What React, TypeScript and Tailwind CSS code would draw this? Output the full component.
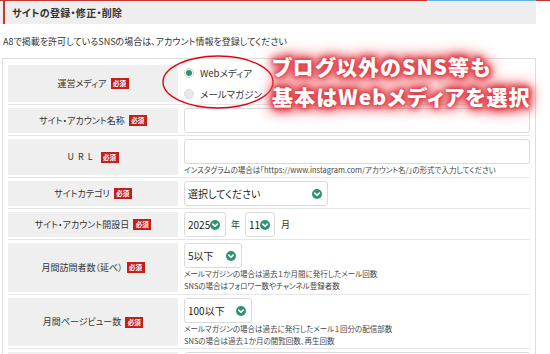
import React from "react";

const Chevron = () => (
  <svg width="10" height="10" viewBox="0 0 10 10" className="shrink-0">
    <circle cx="5" cy="5" r="5" fill="#2f9270" />
    <path d="M2.8 4.1 L5 6.3 L7.2 4.1" stroke="#fff" strokeWidth="1.6" fill="none" strokeLinecap="round" strokeLinejoin="round" />
  </svg>
);

const Badge = () => (
  <span className="inline-flex items-center justify-center w-[18px] h-[11px] bg-[#c4201b] text-white text-[6.5px] font-bold leading-none">
    必須
  </span>
);

const Label = ({ children }: { children?: React.ReactNode }) => (
  <div className="w-[170px] shrink-0 bg-[#efefef] flex items-center justify-center gap-[4px] text-[9px] text-[#333]">
    <span>{children}</span>
    <Badge />
  </div>
);

const Select = ({ text, w }: { text: string; w: string }) => (
  <div className={`h-[25px] ${w} flex items-center justify-between bg-white border border-[#dadada] rounded-[3px] pl-[3px] pr-[5px] text-[10px] text-[#222]`}>
    <span>{text}</span>
    <Chevron />
  </div>
);

const Row = ({ children }: { children: React.ReactNode }) => (
  <div className="flex items-stretch gap-[6px] pt-[3px] pb-[2px] border-b border-[#e6e6e6]">{children}</div>
);

export default function App() {
  return (
    <div className="relative w-[550px] h-[354px] overflow-hidden bg-white font-['Noto_Sans_CJK_JP',sans-serif] [font-feature-settings:'palt'] text-[#333]">
      <div className="flex h-px">
        <div className="w-[427px] bg-[#c8372d]" />
        <div className="w-[109px] bg-[#6aaee0]" />
        <div className="flex-1 bg-[#c8372d]" />
      </div>
      <div className="w-[536px] h-[23px] bg-[#eeeeee] pl-[3px]">
        <div className="h-full border-l-[2px] border-[#c8372d] pl-[7px] flex items-center text-[10px] font-bold text-[#333] tracking-[0.3px]">
          サイトの登録・修正・削除
        </div>
      </div>
      <div className="mt-[12px] pl-[3px] text-[9px] leading-[12px] text-[#333]">
        A8で掲載を許可しているSNSの場合は、アカウント情報を登録してください
      </div>
      <div className="mt-[10px] ml-[2px] w-[534px] border border-[#dddddd] px-[5px] pt-[3px]">
        <Row>
          <Label>運営メディア</Label>
          <div className="flex-1 h-[37px] flex flex-col justify-center gap-[7px] text-[9.5px] text-[#333]">
            <div className="flex items-center gap-[6px]">
              <span className="w-[10px] h-[10px] rounded-full border border-[#d0d0d0] bg-white flex items-center justify-center">
                <span className="w-[6px] h-[6px] rounded-full bg-[#2f9270]" />
              </span>
              <span>Webメディア</span>
            </div>
            <div className="flex items-center gap-[6px]">
              <span className="w-[10px] h-[10px] rounded-full border border-[#dcdcdc] bg-[#e9e9e9]" />
              <span>メールマガジン</span>
            </div>
          </div>
        </Row>
        <Row>
          <Label>サイト・アカウント名称</Label>
          <div className="flex-1">
            <div className="h-[25px] bg-white border border-[#dadada] rounded-[3px]" />
          </div>
        </Row>
        <Row>
          <Label>
            <span className="tracking-[4px]">URL</span>
          </Label>
          <div className="flex-1">
            <div className="h-[25px] bg-white border border-[#dadada] rounded-[3px]" />
            <div className="text-[7.5px] leading-[11px] text-[#444] whitespace-nowrap">
              インスタグラムの場合は「https://www.instagram.com/アカウント名/」の形式で入力してください
            </div>
          </div>
        </Row>
        <Row>
          <Label>サイトカテゴリ</Label>
          <div className="flex-1">
            <Select text="選択してください" w="w-[144px]" />
          </div>
        </Row>
        <Row>
          <Label>サイト・アカウント開設日</Label>
          <div className="flex-1 flex items-center gap-[4px] text-[9px]">
            <Select text="2025" w="w-[42px]" />
            <span className="px-[1px]">年</span>
            <Select text="11" w="w-[30px]" />
            <span className="pl-[2px]">月</span>
          </div>
        </Row>
        <Row>
          <Label>月間訪問者数（延べ）</Label>
          <div className="flex-1">
            <Select text="5以下" w="w-[58px]" />
            <div className="text-[7.5px] leading-[12px] text-[#444]">
              <div>メールマガジンの場合は過去１か月間に発行したメール回数</div>
              <div>SNSの場合はフォロワー数やチャンネル登録者数</div>
            </div>
          </div>
        </Row>
        <Row>
          <Label>月間ページビュー数</Label>
          <div className="flex-1">
            <Select text="100以下" w="w-[68px]" />
            <div className="text-[7.5px] leading-[11.5px] text-[#444]">
              <div>メールマガジンの場合は過去に発行したメール１回分の配信部数</div>
              <div>SNSの場合は過去１か月の閲覧回数、再生回数</div>
            </div>
          </div>
        </Row>
        <div className="flex items-stretch gap-[6px] pt-[3px]">
          <div className="w-[170px] h-[40px] shrink-0 bg-[#efefef]" />
          <div className="flex-1 h-[40px] bg-white border border-[#dadada] rounded-[3px]" />
        </div>
      </div>

      <svg className="absolute left-[160px] top-[53px]" width="120" height="58" viewBox="0 0 120 58">
        <ellipse cx="58" cy="29" rx="55" ry="26" fill="none" stroke="#e60012" strokeWidth="1.4" />
      </svg>

      <div className="absolute left-[272px] top-[51px] text-white font-black text-[21px] leading-[30px] tracking-[1.1px] whitespace-nowrap [text-shadow:0_0_2px_#df3f48,0_0_4px_#df3f48,0_0_6px_#e0434c,0_0_8px_#e0434c,0_0_10px_#e24a53,0_0_13px_#e65860,0_0_16px_#ea666e,0_0_20px_#f08088]">
        <div>ブログ以外のSNS等も</div>
        <div>基本はWebメディアを選択</div>
      </div>
    </div>
  );
}
